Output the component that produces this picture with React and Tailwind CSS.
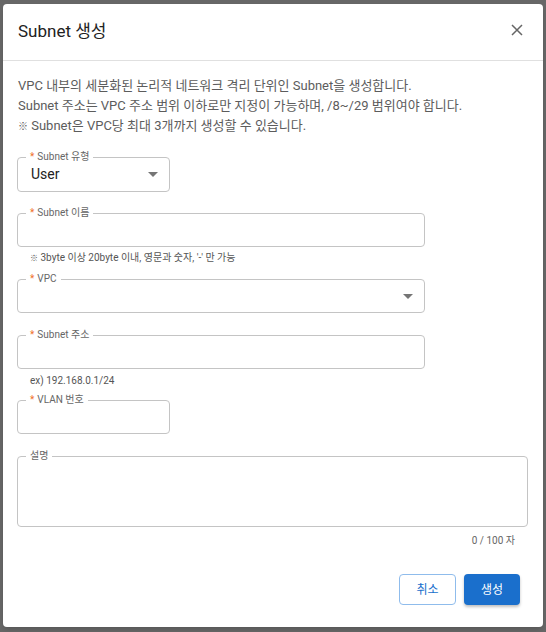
import React from 'react';

const Caret = ({ className = '' }) => (
  <svg width="10" height="5" viewBox="0 0 10 5" className={className}>
    <path d="M0 0h10L5 5z" fill="#757575" />
  </svg>
);

function Outlined({ label, required = true, className = '', children }) {
  return (
    <div className={`relative rounded-[4px] border border-[#c4c4c4] ${className}`}>
      <span className="absolute -top-[7px] left-[8px] flex items-center bg-white pl-[4px] pr-[4px] text-[10px] leading-[12px] text-[#666]">
        {required && <span className="mr-[3px] text-[#f0702a]">*</span>}
        {label}
      </span>
      {children}
    </div>
  );
}

export default function App() {
  return (
    <div className="min-h-[632px] bg-[#676767] pl-[3px] pt-[4px] font-[Roboto,'Noto_Sans_CJK_KR',sans-serif]">
      <div className="flex h-[623px] w-[540px] flex-col rounded-[4px] bg-white shadow-md">
        {/* Header */}
        <div className="flex h-[57px] shrink-0 items-center justify-between border-b border-[#e0e0e0] pl-[15px] pr-[20px]">
          <h2 className="text-[17px] text-[#222]">Subnet 생성</h2>
          <svg width="12" height="12" viewBox="0 0 12 12" className="-mt-[5px]">
            <path d="M1 1l10 10M11 1L1 11" stroke="#666" strokeWidth="1.5" />
          </svg>
        </div>

        {/* Body */}
        <div className="flex flex-1 flex-col pl-[14px] pr-[15px] pt-[15px]">
          <div className="pl-[1px] text-[13px] leading-[20px] text-[#5c5c5c]">
            <p>VPC 내부의 세분화된 논리적 네트워크 격리 단위인 Subnet을 생성합니다.</p>
            <p>Subnet 주소는 VPC 주소 범위 이하로만 지정이 가능하며, /8~/29 범위여야 합니다.</p>
            <p className="h-[20px]"><span className="text-[10px] leading-none">※</span> Subnet은 VPC당 최대 3개까지 생성할 수 있습니다.</p>
          </div>

          <Outlined label="Subnet 유형" className="mt-[21px] flex h-[35px] w-[153px] items-center justify-between pl-[13px] pr-[11px]">
            <span className="text-[14px] text-[#222]">User</span>
            <Caret />
          </Outlined>

          <Outlined label="Subnet 이름" className="mt-[21px] h-[34px] w-[408px]" />
          <p className="ml-[13px] mt-[4px] h-[14px] text-[10px] leading-[14px] text-[#555]">
            <span className="text-[8px] leading-none">※</span> 3byte 이상 20byte 이내, 영문과 숫자, '-' 만 가능
          </p>

          <Outlined label="VPC" className="mt-[14px] flex h-[34px] w-[408px] items-center justify-end pr-[11px]">
            <Caret />
          </Outlined>

          <Outlined label="Subnet 주소" className="mt-[22px] h-[34px] w-[408px]" />
          <p className="ml-[13px] mt-[5px] text-[10px] leading-[14px] text-[#555]">ex) 192.168.0.1/24</p>

          <Outlined label="VLAN 번호" className="mt-[12px] h-[34px] w-[153px]" />

          <Outlined label="설명" required={false} className="mt-[22px] h-[71px] w-full" />
          <p className="mr-[13px] mt-[7px] text-right text-[10px] leading-[14px] text-[#666]">0 / 100 자</p>

          <div className="mr-[8px] mt-[26px] flex justify-end gap-[8px]">
            <button className="h-[31px] w-[57px] rounded-[4px] border border-[#8fbcec] text-[12px] text-[#1a6fcc]">
              취소
            </button>
            <button className="h-[31px] w-[56px] rounded-[4px] bg-[#1a6fcc] text-[12px] text-white shadow-[0_2px_3px_rgba(0,0,0,0.25)]">
              생성
            </button>
          </div>
        </div>
      </div>
    </div>
  );
}
